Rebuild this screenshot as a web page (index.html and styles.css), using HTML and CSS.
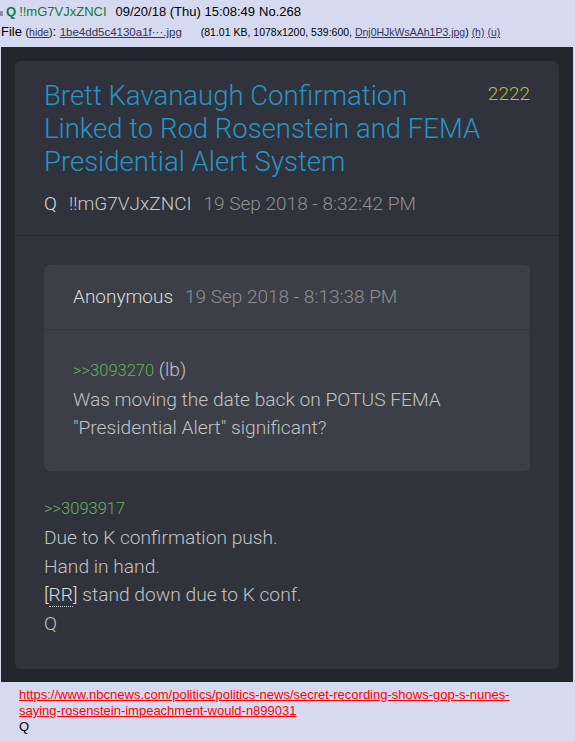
FILE: index.html
```html
<!DOCTYPE html>
<html>
<head>
<meta charset="utf-8">
<link rel="stylesheet" href="styles.css">
</head>
<body>
<div class="post">
  <div class="intro">
    <span class="arrow"></span>
    <span class="name">Q</span>
    <span class="trip">!!mG7VJxZNCI</span>
    <span class="time">09/20/18 (Thu) 15:08:49</span>
    <span class="no">No.268</span>
  </div>
  <div class="fileinfo">
    File <span class="small">(<a class="lnk">hide</a>)</span>: <a class="lnk fname">1be4dd5c4130a1f···.jpg</a><span class="small">(81.01 KB, 1078x1200, 539:600, <a class="lnk">Dnj0HJkWsAAh1P3.jpg</a>) <a class="lnk">(h)</a> <a class="lnk">(u)</a></span>
  </div>
  <div class="shot">
    <div class="card">
      <div class="card-head">
        <div class="title-row">
          <div class="title">Brett Kavanaugh Confirmation<br>Linked to Rod Rosenstein and FEMA<br>Presidential Alert System</div>
          <div class="count">2222</div>
        </div>
        <div class="meta"><span class="qname">Q</span><span class="qtrip">!!mG7VJxZNCI</span><span class="qdate">19 Sep 2018 - 8:32:42 PM</span></div>
      </div>
      <div class="card-body">
        <div class="quote">
          <div class="quote-head"><span class="anon">Anonymous</span><span class="qdate">19 Sep 2018 - 8:13:38 PM</span></div>
          <div class="quote-body">
            <div class="line"><span class="ref">&gt;&gt;3093270</span> (lb)</div>
            <div class="line">Was moving the date back on POTUS FEMA</div>
            <div class="line">"Presidential Alert" significant?</div>
          </div>
        </div>
        <div class="reply">
          <div class="line"><span class="ref">&gt;&gt;3093917</span></div>
          <div class="line">Due to K confirmation push.</div>
          <div class="line">Hand in hand.</div>
          <div class="line"><span class="abbr">[<span class="dot">RR</span>]</span> stand down due to K conf.</div>
          <div class="line">Q</div>
        </div>
      </div>
    </div>
  </div>
  <div class="body">
    <a class="red">https://www.nbcnews.com/politics/politics-news/secret-recording-shows-gop-s-nunes-saying-rosenstein-impeachment-would-n899031</a><br>
    Q
  </div>
</div>
</body>
</html>
```
FILE: styles.css
```css
html, body {
  margin: 0;
  padding: 0;
  background: #d6daf0;
}
body {
  font-family: "Liberation Sans", Arial, sans-serif;
  font-size: 13px;
  color: #000;
  width: 575px;
  height: 741px;
  overflow: hidden;
}
.intro {
  padding-top: 4px;
  line-height: 16px;
  height: 16px;
  white-space: nowrap;
  display: flex;
  align-items: center;
}
.arrow {
  display: inline-block;
  width: 3px;
  height: 5px;
  background: #8a8fa8;
  margin-right: 3px;
  margin-top: 3px;
}
.name {
  color: #117743;
  font-weight: bold;
  margin-right: 3px;
}
.trip {
  color: #117743;
  margin-right: 9px;
}
.time { margin-right: 4px; }
.fileinfo {
  margin-top: 4px;
  height: 16px;
  line-height: 16px;
  white-space: nowrap;
  padding-left: 1px;
}
.small { font-size: 10.5px; }
.lnk {
  color: #34345c;
  text-decoration: underline;
}
.fname {
  font-size: 11.5px;
  margin-right: 19px;
}
.shot {
  margin: 7px 0 0 1px;
  width: 572px;
  height: 635px;
  box-sizing: border-box;
  padding: 14px;
  background: #23262d;
  font-family: Roboto, "Noto Sans", sans-serif;
  font-weight: 300;
}
.card {
  background: #30333b;
  border-radius: 6px;
}
.card-head {
  padding: 18px 29px 19px;
  border-bottom: 1px solid #282b32;
}
.title-row {
  display: flex;
  align-items: flex-start;
}
.title {
  flex: 1;
  color: #2993c7;
  font-size: 27.5px;
  line-height: 33px;
  white-space: nowrap;
}
.count {
  color: #bfbe3e;
  font-size: 19px;
  line-height: 33px;
  margin-top: -2px;
}
.meta {
  margin-top: 14px;
  line-height: 24px;
  font-size: 19px;
  white-space: nowrap;
}
.qname {
  color: #dcdcdc;
  margin-right: 12px;
}
.qtrip {
  color: #c9cacc;
  margin-right: 12px;
}
.qdate { color: #8f9094; }
.card-body {
  padding: 29px 29px 30px;
}
.quote {
  background: #3c3f47;
  border-radius: 6px;
}
.quote-head {
  padding: 20px 29px;
  line-height: 24px;
  font-size: 19px;
  border-bottom: 1px solid #34373f;
  white-space: nowrap;
}
.anon {
  color: #dcdcdc;
  margin-right: 12px;
}
.quote-body {
  padding: 26px 29px 28px;
}
.line {
  font-size: 19.2px;
  line-height: 28.7px;
  color: #c2c3c6;
  white-space: nowrap;
}
.ref {
  color: #64b35a;
  font-size: 16.5px;
}
.reply {
  margin-top: 23px;
}
.abbr {
  color: #dcdcdc;
}
.dot {
  border-bottom: 1px dotted #cfcfcf;
}
.body {
  margin: 5px 40px 0 19px;
  line-height: 16px;
  font-size: 13px;
}
.red {
  color: #f00;
  text-decoration: underline;
}
```
